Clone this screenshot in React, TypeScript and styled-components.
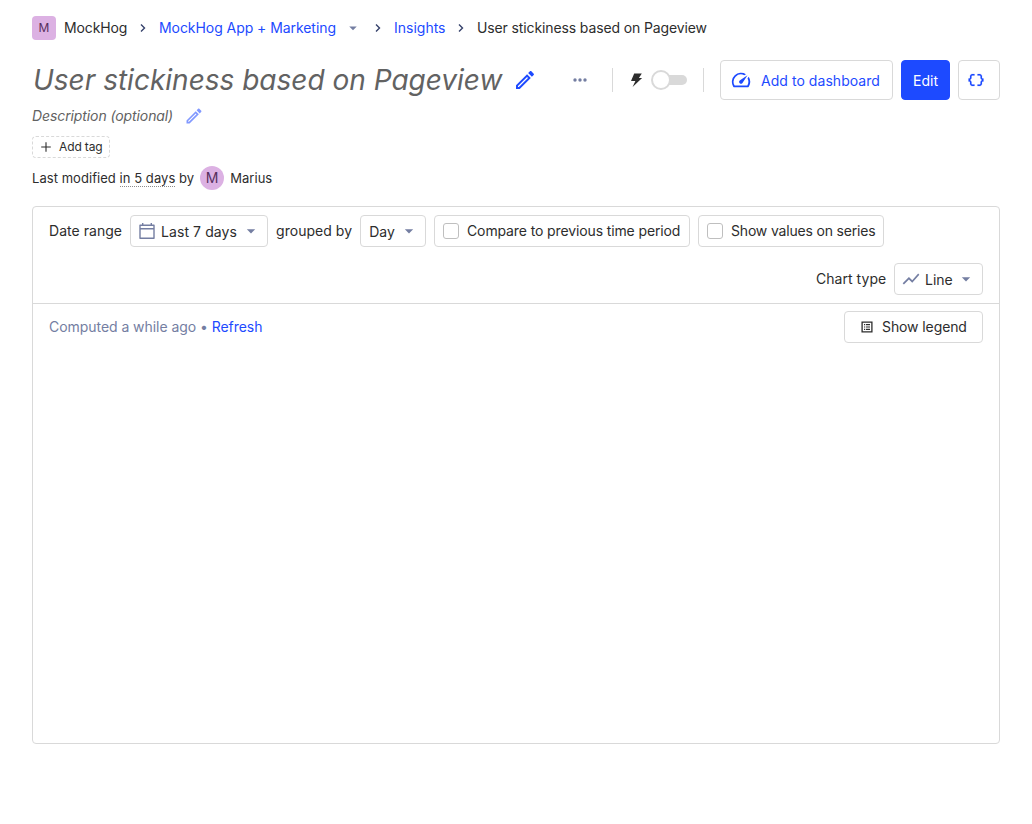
import React from 'react';
import styled, { createGlobalStyle, css } from 'styled-components';

const GlobalStyle = createGlobalStyle`
  *, *::before, *::after { box-sizing: border-box; }
  body {
    margin: 0;
    background: #fff;
    color: #2d2d2d;
    font-family: Inter, "Liberation Sans", sans-serif;
    font-size: 14px;
    font-weight: 400;
    line-height: 20px;
  }
`;

const Page = styled.main`
  width: 1032px;
  height: 824px;
  padding: 16px 32px 0;
`;

const Breadcrumbs = styled.nav`
  display: flex;
  align-items: center;
  height: 24px;
`;

const Avatar = styled.span<{ $round?: boolean }>`
  display: flex;
  align-items: center;
  justify-content: center;
  flex: none;
  width: 24px;
  height: 24px;
  border-radius: ${p => (p.$round ? '50%' : '4px')};
  background: #dcb1e3;
  color: #572e5e;
  font-size: ${p => (p.$round ? 14 : 12)}px;
  letter-spacing: 0;
`;

const Crumb = styled.span<{ $link?: boolean; $width: number; $track?: number }>`
  width: ${p => p.$width}px;
  white-space: nowrap;
  letter-spacing: ${p => p.$track || 0}px;
  color: ${p => (p.$link ? '#1d4aff' : '#2d2d2d')};
`;

const Gap = styled.span`
  width: 8px;
`;

const Glyph = styled.svg<{ $size: number; $color?: string; $m?: string }>`
  display: block;
  flex: none;
  width: ${p => p.$size}px;
  height: ${p => p.$size}px;
  margin: ${p => p.$m || 0};
  color: ${p => p.$color || 'currentColor'};
  fill: currentColor;
`;

const TitleBar = styled.header`
  display: flex;
  align-items: center;
  height: 40px;
  margin-top: 20px;
`;

const Title = styled.h1`
  margin: 0;
  width: 482px;
  padding-left: 1px;
  font-size: 28px;
  line-height: 40px;
  font-weight: 400;
  font-style: italic;
  color: #626262;
  white-space: nowrap;
`;

const Actions = styled.div`
  display: flex;
  align-items: center;
  margin-left: auto;
`;

const Divider = styled.span`
  width: 1px;
  height: 24px;
  background: #d9d9d9;
`;

const Track = styled.span`
  display: flex;
  align-items: center;
  width: 34px;
  height: 10px;
  margin: 0 16px 0 9px;
  border-radius: 5px;
  background: #d9d9d9;
`;

const Knob = styled.span`
  flex: none;
  width: 20px;
  height: 20px;
  margin-left: -2px;
  border: 2px solid #d9d9d9;
  border-radius: 50%;
  background: #fff;
`;

const Button = styled.button<{ $primary?: boolean; $width: number; $pad: number; $small?: boolean; $track?: number }>`
  display: flex;
  align-items: center;
  flex: none;
  width: ${p => p.$width}px;
  height: ${p => (p.$small ? 32 : 40)}px;
  padding: 0 0 0 ${p => p.$pad}px;
  border: 1px solid #d9d9d9;
  border-radius: 4px;
  background: #fff;
  color: ${p => (p.$small ? '#2d2d2d' : '#1d4aff')};
  font: inherit;
  letter-spacing: ${p => p.$track || 0}px;
  white-space: nowrap;
  ${p => p.$primary && css`
    border-color: #1d4aff;
    background: #1d4aff;
    color: #fff;
  `}
`;

const ButtonText = styled.span<{ $width?: number }>`
  width: ${p => (p.$width ? p.$width + 'px' : 'auto')};
  padding-top: 2px;
`;

const ButtonGroup = styled.div`
  display: flex;
  gap: 8px;
  margin-left: 16px;
`;

const Description = styled.div`
  display: flex;
  align-items: center;
  height: 20px;
  margin-top: 6px;
  font-style: italic;
  color: #626262;
`;

const DescriptionText = styled.span`
  width: 153px;
  letter-spacing: -0.1px;
  white-space: nowrap;
`;

const Tag = styled.button`
  display: flex;
  align-items: center;
  width: 78px;
  height: 22px;
  margin: 10px 0 0;
  padding: 0 0 0 6px;
  border: 1px dashed #d9d9d9;
  border-radius: 4px;
  background: #fff;
  color: #2d2d2d;
  font: inherit;
  font-size: 12px;
  letter-spacing: -0.12px;
  white-space: nowrap;
`;

const Modified = styled.div`
  display: flex;
  align-items: center;
  gap: 6px;
  height: 24px;
  margin-top: 8px;
  font-size: 13px;
  letter-spacing: 0.05px;
  white-space: pre;
`;

const Dotted = styled.span`
  display: inline-block;
  line-height: 16px;
  border-bottom: 1px dotted #8c8c8c;
`;

const Panel = styled.section`
  height: 538px;
  margin-top: 16px;
  border: 1px solid #d9d9d9;
  border-radius: 4px;
`;

const Filters = styled.div`
  display: flex;
  flex-direction: column;
  gap: 16px;
  height: 97px;
  padding: 8px 16px;
  border-bottom: 1px solid #d9d9d9;
`;

const FilterRow = styled.div<{ $end?: boolean }>`
  display: flex;
  align-items: center;
  justify-content: ${p => (p.$end ? 'flex-end' : 'flex-start')};
  gap: 8px;
`;

const Label = styled.span<{ $width: number }>`
  width: ${p => p.$width}px;
  letter-spacing: 0.04px;
  white-space: nowrap;
`;

const Checkbox = styled.span`
  flex: none;
  width: 16px;
  height: 16px;
  margin-right: 8px;
  border: 1px solid #bfbfbf;
  border-radius: 3px;
`;

const Status = styled.div`
  display: flex;
  align-items: center;
  justify-content: space-between;
  height: 46px;
  padding: 0 16px;
  color: #747ea2;
  letter-spacing: -0.05px;
`;

const Refresh = styled.a`
  color: #1d4aff;
`;

const Chevron = ({ m }: { m: string }) => (
  <Glyph viewBox="0 0 16 16" $size={16} $color="#35416b" $m={m}>
    <path d="M6 4.5L9.5 8L6 11.5" fill="none" stroke="currentColor" strokeWidth="1.4" />
  </Glyph>
);

const Caret = ({ size = 20, m }: { size?: number; m?: string }) => (
  <Glyph viewBox="0 0 24 24" $size={size} $color="#747ea2" $m={m}>
    <path d="M7 10l5 5 5-5z" />
  </Glyph>
);

const Pencil = ({ size, color, m }: { size: number; color: string; m?: string }) => (
  <Glyph viewBox="0 0 24 24" $size={size} $color={color} $m={m}>
    <path d="M14.06 9.02l.92.92L5.92 19H5v-.92l9.06-9.06M17.66 3c-.25 0-.51.1-.7.29l-1.83 1.83 3.75 3.75 1.83-1.83c.39-.39.39-1.02 0-1.41l-2.34-2.34c-.2-.2-.45-.29-.71-.29zm-3.6 3.19L3 17.25V21h3.75L17.81 9.94l-3.75-3.75z" />
  </Glyph>
);

export default function App() {
  return (
    <>
      <GlobalStyle />
      <Page>
        <Breadcrumbs>
          <Avatar>M</Avatar>
          <Gap />
          <Crumb $width={63} $track={-0.12}>MockHog</Crumb>
          <Chevron m="0 8px" />
          <Crumb $link $width={177} $track={-0.06}>MockHog App + Marketing</Crumb>
          <Caret size={18} m="0 8px" />
          <Chevron m="0 8px 0 0" />
          <Crumb $link $width={51}>Insights</Crumb>
          <Chevron m="0 8px" />
          <Crumb $width={232} $track={-0.12}>User stickiness based on Pageview</Crumb>
        </Breadcrumbs>

        <TitleBar>
          <Title>User stickiness based on Pageview</Title>
          <Pencil size={24} color="#1d4aff" m="0 0 0 -1px" />
          <Actions>
            <Glyph viewBox="0 0 16 16" $size={16} $color="#747ea2" $m="0 24px 0 0">
              <circle cx="3" cy="8" r="1.7" />
              <circle cx="8" cy="8" r="1.7" />
              <circle cx="13" cy="8" r="1.7" />
            </Glyph>
            <Divider />
            <Glyph viewBox="0 0 16 16" $size={16} $color="#2d2d2d" $m="0 0 0 15px">
              <path d="M6.2 1.4h7.6L10.9 6h3.2L4.6 15l2.8-6H3z" />
            </Glyph>
            <Track><Knob /></Track>
            <Divider />
            <ButtonGroup>
              <Button $width={173} $pad={9} $track={0.05}>
                <Glyph viewBox="0 0 24 24" $size={22} $m="0 9px 0 0">
                  <path d="M20.38 8.57l-1.23 1.85a8 8 0 0 1-.22 7.58H5.07A8 8 0 0 1 15.58 6.85l1.85-1.23A10 10 0 0 0 3.35 19a2 2 0 0 0 1.72 1h13.85a2 2 0 0 0 1.74-1 10 10 0 0 0-.27-10.44zm-9.79 6.84a2 2 0 0 0 2.83 0l5.66-8.49-8.49 5.66a2 2 0 0 0 0 2.83z" />
                </Glyph>
                <ButtonText>Add to dashboard</ButtonText>
              </Button>
              <Button $primary $width={49} $pad={11}><ButtonText>Edit</ButtonText></Button>
              <Button $width={42} $pad={8}>
                <Glyph viewBox="0 0 24 24" $size={18}>
                  <path
                    stroke="currentColor"
                    strokeWidth="0.2"
                    d="M4 7v2c0 .55-.45 1-1 1H2v4h1c.55 0 1 .45 1 1v2c0 1.65 1.35 3 3 3h3v-2H7c-.55 0-1-.45-1-1v-2c0-1.3-.84-2.42-2-2.83v-.34C5.16 11.42 6 10.3 6 9V7c0-.55.45-1 1-1h3V4H7C5.35 4 4 5.35 4 7zM21 10c-.55 0-1-.45-1-1V7c0-1.65-1.35-3-3-3h-3v2h3c.55 0 1 .45 1 1v2c0 1.3.84 2.42 2 2.83v.34c-1.16.41-2 1.52-2 2.83v2c0 .55-.45 1-1 1h-3v2h3c1.65 0 3-1.35 3-3v-2c0-.55.45-1 1-1h1v-4h-1z"
                  />
                </Glyph>
              </Button>
            </ButtonGroup>
          </Actions>
        </TitleBar>

        <Description>
          <DescriptionText>Description (optional)</DescriptionText>
          <Pencil size={20} color="#8299ff" m="0 0 0 -1px" />
        </Description>

        <Tag>
          <Glyph viewBox="0 0 14 14" $size={14} $m="0 6px 0 0">
            <path d="M7 2.2v9.6M2.2 7h9.6" stroke="currentColor" strokeWidth="1.1" />
          </Glyph>
          Add tag
        </Tag>

        <Modified>
          <span>Last modified <Dotted>in 5 days</Dotted> by</span>
          <Avatar $round>M</Avatar>
          <span>Marius</span>
        </Modified>

        <Panel>
          <Filters>
            <FilterRow>
              <Label $width={73}>Date range</Label>
              <Button $small $width={138} $pad={7} $track={0.08}>
                <Glyph viewBox="0 0 18 18" $size={18} $color="#747ea2" $m="0 5px 0 0">
                  <path
                    d="M2 3.2h14v13.1H2zM2 6.8h14M4.7 1v2.200M13.300 1v2.200"
                    fill="none"
                    stroke="currentColor"
                    strokeWidth="1.4"
                    strokeLinejoin="round"
                  />
                </Glyph>
                <ButtonText $width={76}>Last 7 days</ButtonText>
                <Caret m="0 0 0 4px" />
              </Button>
              <Label $width={76}>grouped by</Label>
              <Button $small $width={66} $pad={8}>
                <ButtonText $width={26}>Day</ButtonText>
                <Caret m="0 0 0 4px" />
              </Button>
              <Button $small $width={256} $pad={8} $track={-0.12}><Checkbox />Compare to previous time period</Button>
              <Button $small $width={186} $pad={8} $track={-0.18}><Checkbox />Show values on series</Button>
            </FilterRow>
            <FilterRow $end>
              <Label $width={70}>Chart type</Label>
              <Button $small $width={89} $pad={6}>
                <Glyph viewBox="0 0 24 24" $size={20} $color="#747ea2" $m="0 4px 0 0">
                  <path d="M3.5 18.49l6-6.01 4 4L22 6.92l-1.41-1.41-7.09 7.97-4-4L2 16.99z" />
                </Glyph>
                <ButtonText $width={27}>Line</ButtonText>
                <Caret m="0 0 0 4px" />
              </Button>
            </FilterRow>
          </Filters>
          <Status>
            <span>Computed a while ago • <Refresh>Refresh</Refresh></span>
            <Button $small $width={139} $pad={15} $track={-0.1}>
              <Glyph viewBox="0 0 14 14" $size={14} $m="0 8px 0 0">
                <path d="M2.100 2.100h9.800v9.800H2.100z" fill="none" stroke="currentColor" strokeWidth="1.3" />
                <path d="M4 4.100h1.200v1.200H4zM4 6.400h1.200v1.200H4zM4 8.700h1.200v1.200H4zM6 4.100h4v1.200H6zM6 6.400h4v1.200H6zM6 8.700h4v1.200H6z" />
              </Glyph>
              Show legend
            </Button>
          </Status>
        </Panel>
      </Page>
    </>
  );
}
